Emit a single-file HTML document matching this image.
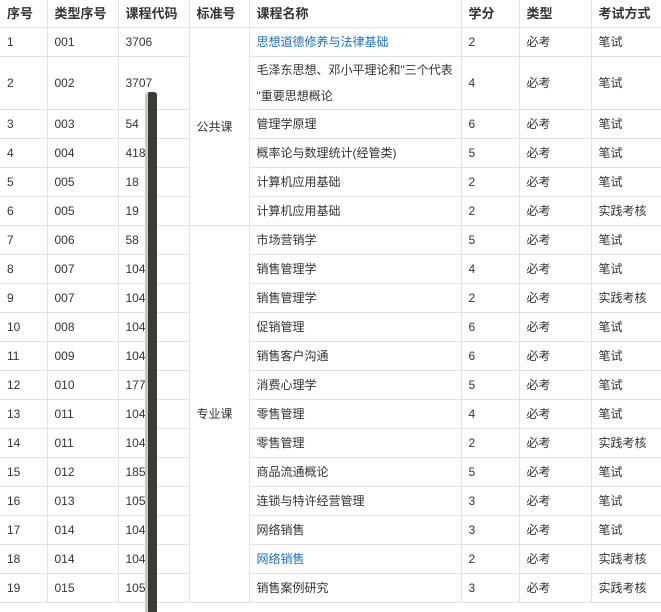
<!DOCTYPE html>
<html><head><meta charset="utf-8"><style>
body{margin:0;background:#fff;width:661px;height:606px;overflow:hidden;position:relative;font-family:"Liberation Sans","Noto Sans CJK SC",sans-serif;font-size:12px;color:#333}
table{border-collapse:collapse;table-layout:fixed;position:absolute;left:0;top:0;width:661px}
td,th{border:1px solid #e2e2e2;padding:0 0 0 7px;text-align:left;vertical-align:middle;height:28px;line-height:26px}
th{font-weight:bold;font-size:13px;height:27px;border-top:none}
tr td:first-child,tr th:first-child{border-left:none}
tr td:last-child,tr th:last-child{border-right:none}
a{color:#1a6fc0;text-decoration:none}
.bar{position:absolute;left:145px;top:92px;width:12px;height:520px;background:#3b3a37;border-left:3px solid #cbc7bf;border-top-left-radius:4px;border-top-right-radius:3px;box-sizing:border-box}
</style></head><body>
<table>
<colgroup><col style="width:47px"><col style="width:71px"><col style="width:71px"><col style="width:60px"><col style="width:212px"><col style="width:58px"><col style="width:72px"><col style="width:70px"></colgroup>
<tr><th>序号</th><th>类型序号</th><th>课程代码</th><th>标准号</th><th>课程名称</th><th>学分</th><th>类型</th><th>考试方式</th></tr>
<tr><td>1</td><td>001</td><td>3706</td><td rowspan="6">公共课</td><td><a>思想道德修养与法律基础</a></td><td>2</td><td>必考</td><td>笔试</td></tr>
<tr><td style="height:52px">2</td><td>002</td><td>3707</td><td style="white-space:nowrap;overflow:hidden">毛泽东思想、邓小平理论和"三个代表<br>"重要思想概论</td><td>4</td><td>必考</td><td>笔试</td></tr>
<tr><td>3</td><td>003</td><td>54</td><td>管理学原理</td><td>6</td><td>必考</td><td>笔试</td></tr>
<tr><td>4</td><td>004</td><td>418</td><td>概率论与数理统计(经管类)</td><td>5</td><td>必考</td><td>笔试</td></tr>
<tr><td>5</td><td>005</td><td>18</td><td>计算机应用基础</td><td>2</td><td>必考</td><td>笔试</td></tr>
<tr><td>6</td><td>005</td><td>19</td><td>计算机应用基础</td><td>2</td><td>必考</td><td>实践考核</td></tr>
<tr><td>7</td><td>006</td><td>58</td><td rowspan="13">专业课</td><td>市场营销学</td><td>5</td><td>必考</td><td>笔试</td></tr>
<tr><td>8</td><td>007</td><td>104</td><td>销售管理学</td><td>4</td><td>必考</td><td>笔试</td></tr>
<tr><td>9</td><td>007</td><td>104</td><td>销售管理学</td><td>2</td><td>必考</td><td>实践考核</td></tr>
<tr><td>10</td><td>008</td><td>104</td><td>促销管理</td><td>6</td><td>必考</td><td>笔试</td></tr>
<tr><td>11</td><td>009</td><td>104</td><td>销售客户沟通</td><td>6</td><td>必考</td><td>笔试</td></tr>
<tr><td>12</td><td>010</td><td>177</td><td>消费心理学</td><td>5</td><td>必考</td><td>笔试</td></tr>
<tr><td>13</td><td>011</td><td>104</td><td>零售管理</td><td>4</td><td>必考</td><td>笔试</td></tr>
<tr><td>14</td><td>011</td><td>104</td><td>零售管理</td><td>2</td><td>必考</td><td>实践考核</td></tr>
<tr><td>15</td><td>012</td><td>185</td><td>商品流通概论</td><td>5</td><td>必考</td><td>笔试</td></tr>
<tr><td>16</td><td>013</td><td>105</td><td>连锁与特许经营管理</td><td>3</td><td>必考</td><td>笔试</td></tr>
<tr><td>17</td><td>014</td><td>104</td><td>网络销售</td><td>3</td><td>必考</td><td>笔试</td></tr>
<tr><td>18</td><td>014</td><td>104</td><td><a>网络销售</a></td><td>2</td><td>必考</td><td>实践考核</td></tr>
<tr><td>19</td><td>015</td><td>105</td><td>销售案例研究</td><td>3</td><td>必考</td><td>实践考核</td></tr>
</table>
<div class="bar"></div>
</body></html>
